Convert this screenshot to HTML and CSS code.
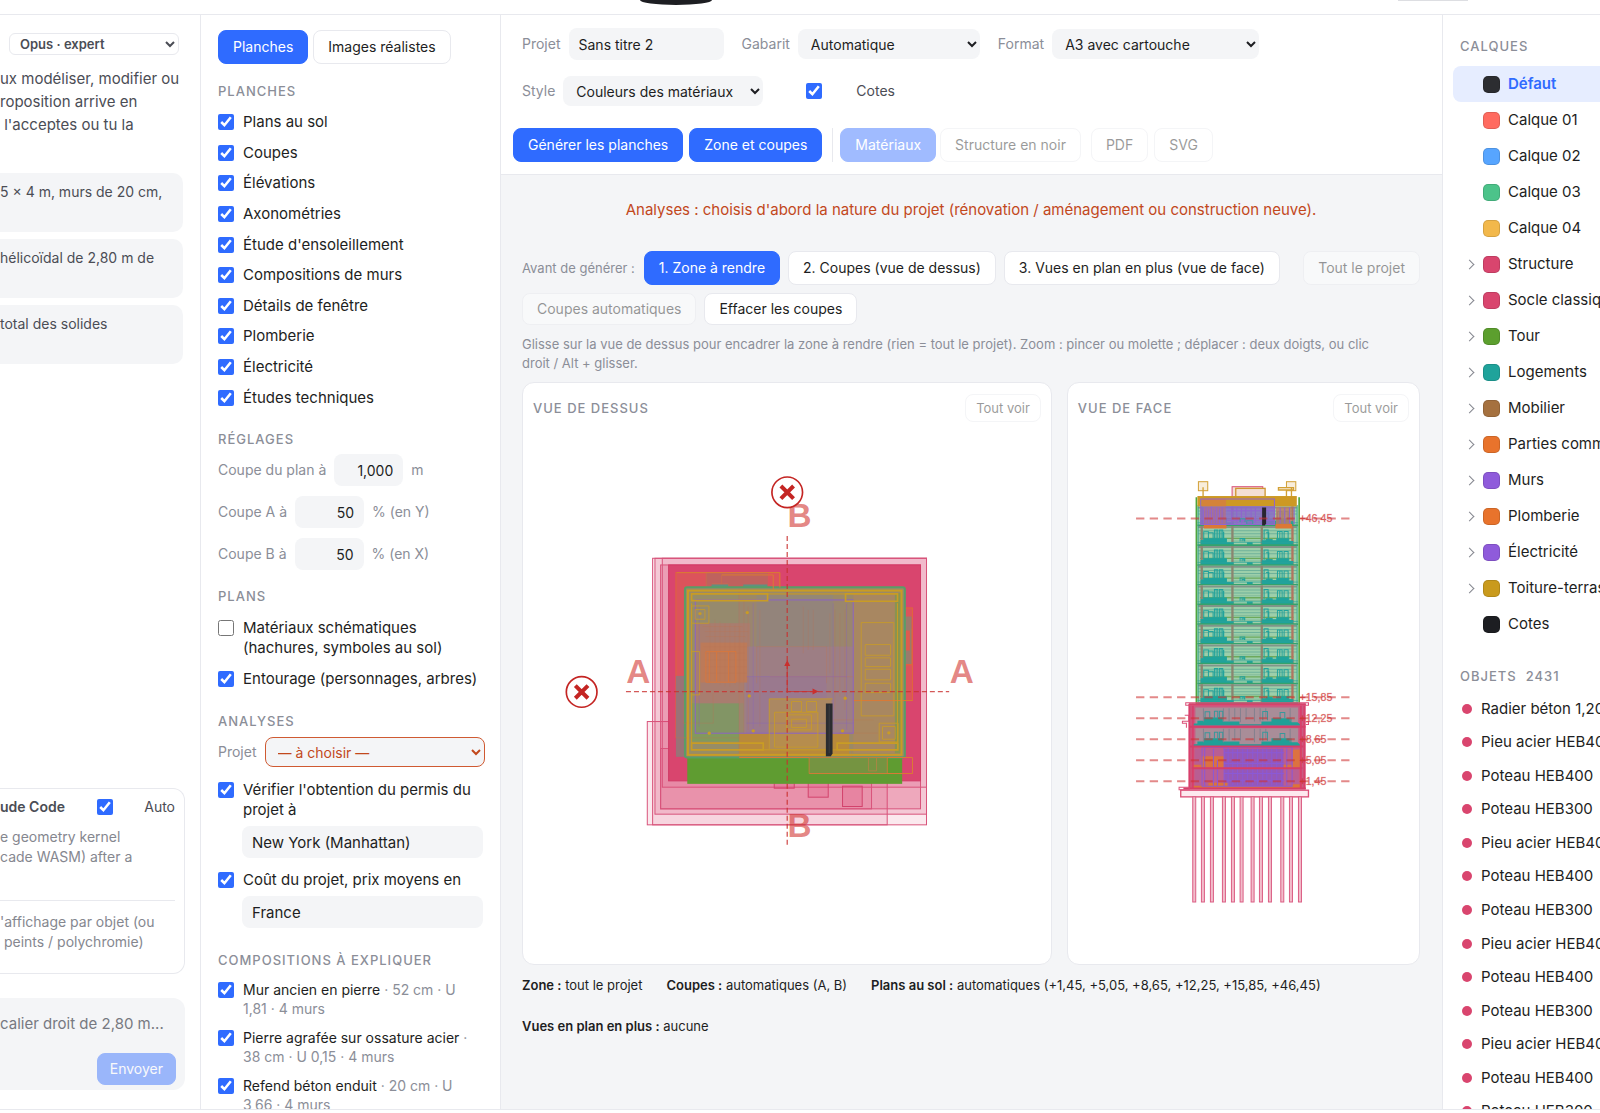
FILE: index.html
```html
<!DOCTYPE html>
<html lang="fr">
<head>
<meta charset="utf-8">
<title>Planches</title>
<link rel="stylesheet" href="styles.css">
</head>
<body>
<header class="topbar"><span class="pill"></span><span class="pill-light"></span></header>
<div class="workspace">

<aside class="chat">
  <div class="chat-model"><select class="model" aria-label="Modèle"><option>Opus · expert</option></select></div>
  <p class="intro">ux modéliser, modifier ou<br>roposition arrive en<br>&nbsp;l'acceptes ou tu la</p>
  <div class="prompts">
    <button class="prompt">5 × 4 m, murs de 20 cm,</button>
    <button class="prompt">hélicoïdal de 2,80 m de</button>
    <button class="prompt">total des solides</button>
  </div>
  <section class="agent">
    <div class="agent-head"><strong>ude Code</strong><input type="checkbox" id="auto" checked><label for="auto">Auto</label></div>
    <p>e geometry kernel<br>cade WASM) after a</p>
    <p class="agent-next">'affichage par objet (ou<br>&nbsp;peints / polychromie)</p>
  </section>
  <div class="composer">
    <textarea rows="1" aria-label="Message" placeholder="calier droit de 2,80 m..."></textarea>
    <button class="btn primary send" disabled>Envoyer</button>
  </div>
</aside>

<aside class="settings">
  <div class="tabs"><button class="btn primary">Planches</button><button class="btn">Images réalistes</button></div>
  <h2>Planches</h2>
  <div class="sheet-list">
    <label class="check"><input type="checkbox" checked>Plans au sol</label>
    <label class="check"><input type="checkbox" checked>Coupes</label>
    <label class="check"><input type="checkbox" checked>Élévations</label>
    <label class="check"><input type="checkbox" checked>Axonométries</label>
    <label class="check"><input type="checkbox" checked>Étude d'ensoleillement</label>
    <label class="check"><input type="checkbox" checked>Compositions de murs</label>
    <label class="check"><input type="checkbox" checked>Détails de fenêtre</label>
    <label class="check"><input type="checkbox" checked>Plomberie</label>
    <label class="check"><input type="checkbox" checked>Électricité</label>
    <label class="check"><input type="checkbox" checked>Études techniques</label>
  </div>
  <h2>Réglages</h2>
  <div class="numbers">
    <label class="field">Coupe du plan à<input class="box num" value="1,000">m</label>
    <label class="field">Coupe A à<input class="box num" value="50">% (en Y)</label>
    <label class="field">Coupe B à<input class="box num" value="50">% (en X)</label>
  </div>
  <h2>Plans</h2>
  <div class="stack">
    <label class="check"><input type="checkbox">Matériaux schématiques (hachures, symboles au sol)</label>
    <label class="check"><input type="checkbox" checked>Entourage (personnages, arbres)</label>
  </div>
  <h2>Analyses</h2>
  <div class="analyses">
    <label class="field project">Projet<select class="warn"><option>— à choisir —</option></select></label>
    <label class="check"><input type="checkbox" checked>Vérifier l'obtention du permis du projet à</label>
    <input class="box place" value="New York (Manhattan)" aria-label="Ville du permis">
    <label class="check"><input type="checkbox" checked>Coût du projet, prix moyens en</label>
    <input class="box place" value="France" aria-label="Pays des prix">
  </div>
  <h2>Compositions à expliquer</h2>
  <div class="walls">
    <label class="check"><input type="checkbox" checked><span>Mur ancien en pierre <small>· 52 cm · U 1,81 · 4 murs</small></span></label>
    <label class="check"><input type="checkbox" checked><span>Pierre agrafée sur ossature acier <small>· 38 cm · U 0,15 · 4 murs</small></span></label>
    <label class="check"><input type="checkbox" checked><span>Refend béton enduit <small>· 20 cm · U 3,66 · 4 murs</small></span></label>
  </div>
</aside>

<main class="main">
  <div class="toolbar">
    <div class="options">
      <label class="field">Projet<input class="box title" value="Sans titre 2"></label>
      <label class="field">Gabarit<select class="box w-gabarit"><option>Automatique</option></select></label>
      <label class="field">Format<select class="box w-format"><option>A3 avec cartouche</option></select></label>
    </div>
    <div class="options second">
      <label class="field">Style<select class="box w-style"><option>Couleurs des matériaux</option></select></label>
      <label class="cotes"><input type="checkbox" checked>Cotes</label>
    </div>
    <div class="actions">
      <button class="btn primary">Générer les planches</button>
      <button class="btn primary">Zone et coupes</button>
      <span class="sep"></span>
      <div class="segmented"><button class="btn primary" disabled>Matériaux</button><button class="btn" disabled>Structure en noir</button></div>
      <div class="exports"><button class="btn" disabled>PDF</button><button class="btn" disabled>SVG</button></div>
    </div>
  </div>
  <div class="content">
    <p class="alert">Analyses : choisis d'abord la nature du projet (rénovation / aménagement ou construction neuve).</p>
    <div class="steps">
      <span class="steps-label">Avant de générer :</span>
      <button class="btn primary">1. Zone à rendre</button>
      <button class="btn">2. Coupes (vue de dessus)</button>
      <button class="btn">3. Vues en plan en plus (vue de face)</button>
      <button class="btn all" disabled>Tout le projet</button>
      <button class="btn low" disabled>Coupes automatiques</button>
      <button class="btn low">Effacer les coupes</button>
    </div>
    <p class="hint">Glisse sur la vue de dessus pour encadrer la zone à rendre (rien = tout le projet). Zoom : pincer ou molette ; déplacer : deux doigts, ou clic droit / Alt + glisser.</p>
    <div class="views">
      <section class="view">
        <div class="view-head"><h2>Vue de dessus</h2><button class="btn small" disabled>Tout voir</button></div>
        <svg viewBox="523 430 528 534" role="img" aria-label="Vue de dessus">
          <g transform="translate(600 460) scale(.33333)" fill="none" stroke-width="3">
            <g fill="#dc4672" stroke="#d8547b" fill-opacity=".12">
              <rect x="142" y="785" width="720" height="310"/>
              <rect x="158" y="295" width="822" height="800"/>
              <rect x="165" y="295" width="815" height="768" fill-opacity=".2"/>
              <rect x="187" y="295" width="793" height="687" fill-opacity=".1"/>
              <rect x="182" y="315" width="780" height="732" fill-opacity=".25"/>
              <rect x="182" y="866" width="633" height="181"/>
            </g>
            <rect x="206" y="315" width="756" height="648" fill="#d9456e" stroke="#d23a66"/>
            <g stroke="#d2436c" fill="#dc4672" fill-opacity=".18">
              <rect x="523" y="963" width="60" height="22"/><rect x="625" y="963" width="60" height="49"/><rect x="728" y="979" width="59" height="61"/>
            </g>
            <g fill="#e2693f" fill-opacity=".4" stroke="#e0653d">
              <rect x="228" y="338" width="311" height="496"/><rect x="850" y="444" width="88" height="278"/><rect x="905" y="507" width="30" height="108"/>
            </g>
            <rect x="319" y="338" width="185" height="60" fill="#b8675f" fill-opacity=".8"/>
            <path d="M319 338v50M335 372h50v20M365 345v45" stroke="#c86a50"/>
            <path d="M335 374h50v12h-50zM430 374h72v10h-72z" fill="#5f9180"/><path d="M915 470h20v142h-20v-40h15v-60h-15z" fill="#9b7a6b"/>
            <rect x="228" y="648" width="30" height="243" fill="#9a7277"/>
            <rect x="262" y="885" width="645" height="87" fill="#5f9c31"/>
            <rect x="255" y="382" width="660" height="511" rx="6" fill="#9b8967" stroke="#589e67" stroke-width="6"/>
            <rect x="265" y="400" width="150" height="480" fill="#978d66"/>
            <rect x="275" y="730" width="142" height="115" fill="#82995d"/>
            <rect x="760" y="400" width="140" height="480" fill="#a88761"/>
            <rect x="885" y="400" width="20" height="480" fill="#8a944f"/>
            <rect x="470" y="405" width="230" height="160" fill="#948775"/>
            <rect x="286" y="490" width="165" height="240" fill="#ab7f68"/>
            <rect x="432" y="560" width="328" height="260" fill="#9f807e"/>
            <rect x="440" y="650" width="240" height="170" fill="#9b7b89"/>
            <rect x="302" y="548" width="140" height="120" fill="#c07c50"/>
            <rect x="418" y="820" width="330" height="68" fill="#b8893c"/>
            <rect x="508" y="717" width="187" height="150" fill="#ae8b5a"/>
            <rect x="524" y="757" width="130" height="105" fill="#b68d4d"/>
            <g stroke="#bd784f" stroke-opacity=".5" stroke-width="2">
              <path d="M308 500h120M315 515h130M318 530h120M312 560h130M315 580h120M315 600h125M315 620h125M315 640h125M330 490v180M345 480v190M360 485v190M375 490v190M390 490v190M405 495v180M420 500v170M470 560h210v110M470 560v110M510 650h250M610 440v140M625 450v120M640 450v120M690 460v180M705 450v300M720 460v250M735 450v300M700 780h120M715 820h120"/>
              <path d="M418 385v505h337v-20M228 834h190M432 420v400M445 440v370M480 450v350M340 700v90h-90V700"/>
            </g>
            <g stroke="#db7935"><path d="M318 575h90v92h-90zM328 575v92M350 575v92M386 575v92M230 338h310v45M365 345h155v45M628 893h310v48H628zM862 893v48M806 893v40h24v-40M938 722H760M418 893h337"/></g>
            <rect x="286" y="420" width="474" height="400" stroke="#8c64c4" fill="#8b60cf" fill-opacity=".07"/>
            <g stroke="#8762bf" stroke-opacity=".35"><path d="M298 440v360M460 430v380M700 430v380M740 430v380M440 650h300M440 790h320"/></g>
            <rect x="628" y="893" width="234" height="47" fill="#83904c" fill-opacity=".6"/>
            <g stroke="#c99c24">
              <rect x="264" y="392" width="641" height="493" stroke-width="6"/>
              <path d="M275 402h228v20H275zM737 402h156v22H737zM275 850h215v20H275zM712 850h182v20H712z" stroke-width="5"/>
              <path d="M503 402h234M275 430v440M893 430v440M490 870h222" stroke-width="3"/>
              <path d="M275 438h52v52h-52zM286 449h29v29h-29zM838 790h57v56h-57zM848 800h38v38h-38zM508 717h190M508 717v150M524 757h130v105H524zM560 765h75v45h-75zM575 778h45v25h-45zM784 488h98v280h-98zM796 554h76v32h-76zM796 594h76v26h-76zM796 628h76v32h-76zM796 670h76v28h-76zM275 575h24v130h-24zM575 725h30v30h-30zM620 725h30v30h-30z" stroke-opacity=".8"/>
            </g>
            <g fill="#c99c24"><circle cx="300" cy="461" r="5"/><circle cx="442" cy="458" r="5"/><circle cx="448" cy="708" r="5"/><circle cx="736" cy="715" r="5"/><circle cx="460" cy="813" r="5"/><circle cx="728" cy="813" r="5"/><circle cx="867" cy="819" r="5"/><circle cx="328" cy="820" r="5"/></g>
            <path d="M678 731h20v150l-5 8h-15z" fill="#2b2c30"/><path d="M688 735v145" stroke="#44454a" stroke-width="2"/>
            <g stroke="#c9302e" stroke-opacity=".8" stroke-width="4"><path d="M78 695h970M562 228v934" stroke-dasharray="15 9"/><path d="M562 695V615M562 695h80" stroke-width="3"/></g>
            <path d="M562 600l9 18h-18zM656 695l-18-9v18z" fill="#c9302e"/>
            <g class="axis"><text x="79" y="668">A</text><text x="1050" y="668">A</text><text x="563" y="200">B</text><text x="563" y="1133">B</text></g>
            <g fill="#fff" stroke="#c42523" stroke-width="5"><circle cx="562" cy="97" r="46"/><circle cx="-55" cy="696" r="46"/><path d="M543 78l38 38M581 78l-38 38M-74 677l38 38M-36 677l-38 38" stroke-width="12"/></g>
          </g>
        </svg>
      </section>
      <section class="view">
        <div class="view-head"><h2>Vue de face</h2><button class="btn small" disabled>Tout voir</button></div>
        <svg viewBox="1068 430 351 534" role="img" aria-label="Vue de face">
          <defs>
            <g id="furniture" fill="none" stroke="#22a39c" stroke-width="3">
              <path d="M303 56V43h8v-5h68v12h20v6z" fill="#1fa39b"/>
              <path d="M311 40V17h14v23M325 20h14v20M343 40V12h10v28M348 40V12M358 40V12h10v28M363 40V12M371 40V17M492 42V12h12v28M498 20h8v20M532 38V16h14v22M539 16v22M552 38V16h12v22"/>
              <path d="M486 56V44h12v-4h18v4h14v-6h36v8h12v10z" fill="#1fa39b"/>
              <path d="M442 56v-6h14v6z" fill="#1fa39b"/><path d="M420 46V37h14v9M426 46v-5h6v5"/>
            </g>
            <g id="floor" fill="none">
              <rect x="292" y="0" width="300" height="59" fill="#9ccfaa"/>
              <path d="M294 3h296" stroke="#81958a" stroke-width="6"/>
              <path d="M294 14h296M294 23h296" stroke="#6fb29a" stroke-width="3"/>
              <path d="M300 37h280" stroke="#6da95c" stroke-width="4"/>
              <path d="M398 31h87M398 45h87" stroke="#74b093" stroke-width="2"/>
              <path d="M305 0v59M397 0v59M485 0v59" stroke="#8b8570" stroke-width="7"/><path d="M577 0v59" stroke="#b07561" stroke-width="7"/>
              <use href="#furniture"/>
              <path d="M292 49h302" stroke="#2aa39a" stroke-width="2"/>
              <path d="M292 57h302" stroke="#36a26c" stroke-width="5"/>
            </g>
          </defs>
          <g transform="translate(1100 460) scale(.33333)" fill="none" stroke-width="3">
            <g stroke="#d2a035" fill="#f8eddb"><rect x="295" y="65" width="28" height="27"/><rect x="559" y="65" width="28" height="27"/><path d="M309 82v28M559 90v20M574 84v26M535 83h45v7h-45z" stroke-width="4"/></g>
            <rect x="396" y="80" width="92" height="35" stroke="#d95078" fill="#f5dfd5"/><rect x="407" y="85" width="88" height="28" stroke="#cf9734" stroke-width="4" fill="#f4dfd4"/>
            <use href="#floor" y="139"/><use href="#floor" y="198"/><use href="#floor" y="258"/><use href="#floor" y="317"/><use href="#floor" y="376"/><use href="#floor" y="435"/><use href="#floor" y="494"/><use href="#floor" y="553"/><use href="#floor" y="613"/><use href="#floor" y="672"/>
            <path d="M289 112v620M597 112v620" stroke="#4fa53c" stroke-width="5"/><path d="M294 135v595M591 135v595" stroke="#35a487" stroke-width="3"/>
            <rect x="292" y="108" width="298" height="31" fill="#cd9924"/>
            <rect x="302" y="138" width="222" height="55" fill="#8a6bc5" fill-opacity=".85"/>
            <rect x="305" y="116" width="73" height="23" fill="#d48339"/>
            <path d="M311 142h66v50h-66z" fill="#b66d82" fill-opacity=".7"/><path d="M311 192h68v13h-68zM526 192h50v13h-50z" fill="#dc7836"/>
            <path d="M527 142h46v50h-46z" fill="#c07865" fill-opacity=".8"/>
            <path d="M302 117h221v76H302zM310 145v45M318 142v48M326 145v45M334 140v50M342 145v45M350 142v48M358 145v45M366 142v48M395 142v48M410 142v48M424 142v48M437 142v48M453 142v48M466 142v48M540 142v48M554 142v48M568 142v48M380 152h140M380 181h140M582 142v50" stroke="#9064cf"/>
            <path d="M420 186v-10h15v10M440 192v-10h18v10" stroke="#3f999f"/>
            <path d="M486 142h12v48l-4 6h-8z" fill="#29242f"/>
            <rect x="267" y="731" width="349" height="257" fill="#cb5b81"/>
            <g><path d="M286 742h308v50H286zM286 804h308v48H286z" fill="#a98d98"/>
              <path d="M277 796v-6h15v-8h20v-10h56v12h50v8h66v-8h30v-10h60v12h18l13 10zM277 858v-6h15v-8h20v-10h56v10h50v8h66v-8h30v-10h60v12h18l13 12z" fill="#20a097"/>
              <path d="M370 744v40M387 744v40M404 744v35M421 744v42M438 744v35M463 744v40M480 744v40M497 744v28M370 806v40M387 806v35M404 806v35M421 806v35M463 806v40M480 806v35M497 806v30M310 744v40M570 744v40M310 806v40M570 806v40" stroke="#83818f"/>
              <path d="M315 775v-20h14v20M343 775v-22h10v22M358 775v-22h10v22M488 780v-26h14v26M540 775v-18h14v18M315 838v-20h14v20M343 838v-22h10v22M358 838v-22h10v22M488 842v-26h14v26M540 838v-18h14v18" stroke="#38989b"/></g>
            <path d="M284 866h312v54H284zM284 926h312v55H284z" fill="#b95e92"/>
            <path d="M305 888h68v32h-68zM577 868h28v54h-28zM276 914h110v9H276zM550 914h55v9h-55z" fill="#dc7240"/>
            <path d="M372 866h178v112H372z" fill="#9658b7"/>
            <path d="M275 984v-7h50v-9h60v10h190v-6h30v12z" fill="#dc7438"/>
            <path d="M306 862h270v116H306zM314 862v116M340 866v110M352 900v78M372 862v116M384 862v116M398 865v110M412 865v110M428 865v110M442 865v110M458 865v110M472 865v110M488 865v110M500 865v110M515 865v110M530 865v110M545 865v110M560 865v110M372 878h180M372 910h180M372 940h180M372 960h180" stroke="#8b59d6"/>
            <path d="M268 731v255M278 731v255M602 731v255M613 731v255" stroke="#d83f6b" stroke-width="6"/>
            <path d="M267 732h350M267 800h349M270 859h340M275 924h332M250 985h367" stroke="#d63e69" stroke-width="6"/>
            <path d="M254 765h12v18h-19v6h12v14M617 785h8v8h-8M237 981h30v8h-30zM257 728h368v7H257z" stroke="#dc5078"/>
            <rect x="242" y="990" width="383" height="20" fill="#fde9ef" stroke="#dc5078" stroke-width="4"/>
            <path d="M278 1010h9v315h-9zM304 1010h9v315h-9zM331 1010h9v315h-9zM367 1010h9v315h-9zM394 1010h9v315h-9zM420 1010h9v315h-9zM453 1010h9v315h-9zM478 1010h9v315h-9zM505 1010h9v315h-9zM542 1010h9v315h-9zM568 1010h9v315h-9zM595 1010h9v315h-9z" fill="#f2bdcb" stroke="#db5e84"/>
            <path d="M108 175h640M108 711h640M108 774h640M108 837h640M108 900h640M108 963h640" stroke="#ce2f2f" stroke-opacity=".57" stroke-width="6" stroke-dasharray="25 16"/>
            <g class="level"><text x="598" y="187">+46,45</text><text x="598" y="723">+15,85</text><text x="598" y="786">+12,25</text><text x="598" y="849">+8,65</text><text x="598" y="912">+5,05</text><text x="598" y="975">+1,45</text></g>
          </g>
        </svg>
      </section>
    </div>
    <div class="summary">
      <span><b>Zone :</b> tout le projet</span>
      <span><b>Coupes :</b> automatiques (A, B)</span>
      <span><b>Plans au sol :</b> automatiques (+1,45, +5,05, +8,65, +12,25, +15,85, +46,45)</span>
      <span><b>Vues en plan en plus :</b> aucune</span>
    </div>
  </div>
</main>

<aside class="layers">
  <h2>Calques</h2>
  <ul class="layer-list">
    <li class="active"><i></i><span class="swatch black"></span>Défaut</li>
    <li><i></i><span class="swatch coral"></span>Calque 01</li>
    <li><i></i><span class="swatch sky"></span>Calque 02</li>
    <li><i></i><span class="swatch mint"></span>Calque 03</li>
    <li><i></i><span class="swatch amber"></span>Calque 04</li>
    <li><i class="chev"></i><span class="swatch rose"></span>Structure</li>
    <li><i class="chev"></i><span class="swatch rose"></span>Socle classique</li>
    <li><i class="chev"></i><span class="swatch green"></span>Tour</li>
    <li><i class="chev"></i><span class="swatch teal"></span>Logements</li>
    <li><i class="chev"></i><span class="swatch brown"></span>Mobilier</li>
    <li><i class="chev"></i><span class="swatch orange"></span>Parties communes</li>
    <li><i class="chev"></i><span class="swatch violet"></span>Murs</li>
    <li><i class="chev"></i><span class="swatch orange"></span>Plomberie</li>
    <li><i class="chev"></i><span class="swatch violet"></span>Électricité</li>
    <li><i class="chev"></i><span class="swatch gold"></span>Toiture-terrasse</li>
    <li><i></i><span class="swatch ink"></span>Cotes</li>
  </ul>
  <h2 class="objects-title">Objets&nbsp; 2431</h2>
  <ul class="object-list">
    <li>Radier béton 1,20</li><li>Pieu acier HEB400</li><li>Poteau HEB400</li><li>Poteau HEB300</li><li>Pieu acier HEB400</li><li>Poteau HEB400</li><li>Poteau HEB300</li><li>Pieu acier HEB400</li><li>Poteau HEB400</li><li>Poteau HEB300</li><li>Pieu acier HEB400</li><li>Poteau HEB400</li><li>Poteau HEB300</li>
  </ul>
</aside>
</div>
</body>
</html>
```
FILE: styles.css
```css
:root { --blue: #2f6bff; --ink: #1d1e22; --text: #4b4d55; --muted: #8b8e98; --line: #e8e9ee; --soft: #f4f5f7; }
* { box-sizing: border-box; }
body { margin: 0; height: 100vh; display: flex; flex-direction: column; overflow: hidden; background: #fff; color: var(--ink); font: 15px/20px Inter, "Liberation Sans", sans-serif; padding-bottom: 3px; }
button, input, select, textarea { font: inherit; color: inherit; }
h2 { margin: 0; font-size: 13px; line-height: 18px; font-weight: 500; letter-spacing: 1px; text-transform: uppercase; color: var(--muted); }
p { margin: 0; }
ul { list-style: none; margin: 0; padding: 0; }
input[type=checkbox] { width: 16px; height: 16px; margin: 0; flex: none; accent-color: var(--blue); }

.topbar { flex: none; height: 15px; display: flex; align-items: flex-start; justify-content: space-between; padding: 0 132px 0 40%; border-bottom: 1px solid var(--line); }
.pill { width: 72px; height: 5px; background: #1d1e22; border-radius: 0 0 36px 36px / 0 0 5px 5px; }
.pill-light { width: 70px; height: 1px; background: #dddee2; }
.workspace { flex: 1; min-height: 0; display: grid; grid-template-columns: 201px 300px minmax(0, 1fr) 158px; border-bottom: 1px solid var(--line); }
.workspace > * { min-height: 0; overflow: hidden; }

.btn { height: 34px; padding: 0 14px; border: 1px solid var(--line); border-radius: 8px; background: #fff; font-size: 14px; white-space: nowrap; }
.btn.primary { background: var(--blue); border-color: var(--blue); color: #fff; }
.btn:disabled { opacity: .45; }
.btn.small { height: 28px; padding: 0 10px; font-size: 13px; }
.box { border: 0; border-radius: 8px; background: var(--soft); height: 32px; padding: 0 10px; font-size: 14px; }
select.box { height: 30px; padding: 0 0 0 9px; }
.field { display: flex; align-items: center; gap: 8px; font-size: 14px; color: var(--muted); white-space: nowrap; }
.field input, .field select { color: var(--ink); }
.check { display: flex; align-items: flex-start; gap: 9px; }
.check input { margin-top: 2px; }

.chat { display: flex; flex-direction: column; border-right: 1px solid var(--line); padding: 18px 15px 19px 0; color: var(--text); }
.chat-model { padding: 0 6px 0 9px; }
.model { display: block; width: 100%; height: 22px; padding: 0 0 0 6px; border: 1px solid var(--line); border-radius: 6px; background: #fff; font-size: 13px; font-weight: 600; }
.intro { line-height: 23px; margin-top: 12px; white-space: nowrap; }
.prompts { display: grid; gap: 7px; margin: 37px 2px 0 0; }
.prompt { height: 59px; padding: 9px 10px 0 0; border: 0; border-radius: 0 10px 10px 0; background: var(--soft); display: flex; align-items: flex-start; font-size: 14px; white-space: nowrap; }
.agent { margin-top: auto; height: 186px; border: 1px solid var(--line); border-left: 0; border-radius: 0 12px 12px 0; padding: 8px 9px 0 0; font-size: 14px; color: #85878f; }
.agent-head { display: flex; align-items: center; justify-content: space-between; color: var(--text); font-size: 14px; margin-bottom: 10px; }
.agent-head strong { font-weight: 600; }
.agent-next { margin-top: 33px; padding-top: 11px; border-top: 1px solid var(--line); white-space: nowrap; }
.composer { margin-top: 24px; background: var(--soft); border-radius: 0 12px 12px 0; padding: 16px 9px 5px 0; display: flex; flex-direction: column; align-items: flex-end; }
.composer textarea { display: block; width: 100%; height: 39px; border: 0; padding: 0; resize: none; background: none; overflow: hidden; white-space: nowrap; }
.composer textarea::placeholder { color: #777981; }
.send { height: 32px; padding: 0 12px; }

.settings { border-right: 1px solid var(--line); padding: 15px 14px 0 17px; }
.settings h2 { margin-top: 24px; }
.tabs { display: flex; gap: 5px; }
.settings .tabs + h2 { margin-top: 18px; }
.sheet-list { min-height: 306px; margin-top: 7px; display: grid; grid-auto-rows: 1fr; align-items: center; }
.settings .sheet-list + h2 { margin-top: 17px; }
.numbers { display: grid; gap: 10px; margin-top: 6px; }
.settings .numbers + h2 { margin-top: 17px; }
.num { width: 69px; text-align: right; }
.stack { display: grid; gap: 11px; margin-top: 13px; }
.settings .stack + h2 { margin-top: 23px; }
.analyses { display: grid; margin-top: 7px; }
.project select { flex: 1; height: 30px; border: 1px solid #cf5a32; border-radius: 8px; background: var(--soft); color: #c2481c; padding: 0 0 0 8px; }
.project { margin-right: 1px; margin-bottom: 13px; }
.place { margin: 6px 3px 12px 24px; font-size: 15px; min-width: 0; }
.place:last-child { margin-bottom: 0; }
.settings .analyses + h2 { margin-top: 23px; }
.walls { display: grid; gap: 10px; margin-top: 11px; padding-right: 16px; font-size: 14px; line-height: 19px; }
.walls small { font-size: 14px; color: var(--muted); }

.main { display: flex; flex-direction: column; background: var(--soft); }
.toolbar { background: #fff; border-bottom: 1px solid var(--line); padding: 13px 12px 12px; }
.options { display: flex; gap: 18px; padding: 0 9px; height: 32px; align-items: center; }
.options.second { margin-top: 15px; }
.title { width: 155px; }
.w-gabarit { width: 182px; }
.w-format { width: 207px; }
.w-style { width: 200px; }
.cotes { display: flex; align-items: center; gap: 34px; margin-left: 25px; font-size: 14px; color: var(--text); }
.actions { display: flex; margin-top: 21px; gap: 6px; }
.sep { width: 1px; background: var(--line); margin: 0 1px 0 4px; }
.segmented { display: flex; gap: 4px; }
.exports { display: flex; gap: 6px; margin-left: 4px; }
.content { padding: 25px 22px 0 21px; }
.alert { text-align: center; color: #c2481c; }
.steps { display: flex; flex-wrap: wrap; align-items: center; gap: 8px; margin-top: 31px; }
.steps-label { font-size: 13px; color: var(--muted); margin-right: 1px; }
.all { margin-left: auto; }
.low { height: 32px; }
.hint { font-size: 13px; line-height: 19px; color: var(--muted); margin-top: 10px; padding-right: 20px; }
.views { display: grid; grid-template-columns: 3fr 2fr; gap: 15px; margin-top: 9px; }
.view { background: #fff; border: 1px solid var(--line); border-radius: 12px; }
.view-head { display: flex; align-items: center; justify-content: space-between; padding: 11px 10px 8px; }
.view svg { display: block; width: 100%; }
.axis { font: bold 100px "Liberation Sans", sans-serif; fill: #cf2c28; fill-opacity: .58; }
.level { font: 32px "Liberation Sans", sans-serif; fill: #ce3434; fill-opacity: .7; stroke: #ce3434; stroke-opacity: .35; stroke-width: 2px; }
.summary { display: flex; flex-wrap: wrap; gap: 21px 24px; margin-top: 10px; font-size: 13px; }
.summary b { font-weight: 600; }

.layers { border-left: 1px solid var(--line); padding: 22px 0 0 10px; white-space: nowrap; }
.layers h2 { margin-left: 7px; }
.layer-list { margin-top: 11px; }
.layer-list li { height: 36px; display: flex; align-items: center; border-radius: 8px 0 0 8px; padding-left: 13px; }
.layer-list .active { background: #e6edff; color: var(--blue); font-weight: 600; }
.layer-list i { width: 17px; flex: none; }
.chev::before { content: ""; display: block; width: 6px; height: 6px; border: solid #85878f; border-width: 1px 1px 0 0; transform: rotate(45deg); }
.swatch { width: 17px; height: 17px; margin-right: 8px; flex: none; border-radius: 5px; border: 1px solid rgba(0, 0, 0, .12); }
.black { background: #2c2d31; } .coral { background: #ff6b60; } .sky { background: #57a5ff; } .mint { background: #4cc38a; }
.amber { background: #f2b84b; } .rose { background: #d9456e; } .green { background: #5c9f2e; } .teal { background: #1fa39b; }
.brown { background: #a5713f; } .orange { background: #e8732c; } .violet { background: #8f5bdb; } .gold { background: #c99a1d; } .ink { background: #1d1e22; }
.layers .objects-title { margin-top: 25px; }
.object-list { display: grid; grid-auto-rows: 1fr; min-height: 436px; margin-top: 7px; }
.object-list li { display: flex; align-items: center; gap: 9px; padding-left: 9px; }
.object-list li::before { content: ""; width: 10px; height: 10px; border-radius: 50%; background: #d9456e; flex: none; }
```
